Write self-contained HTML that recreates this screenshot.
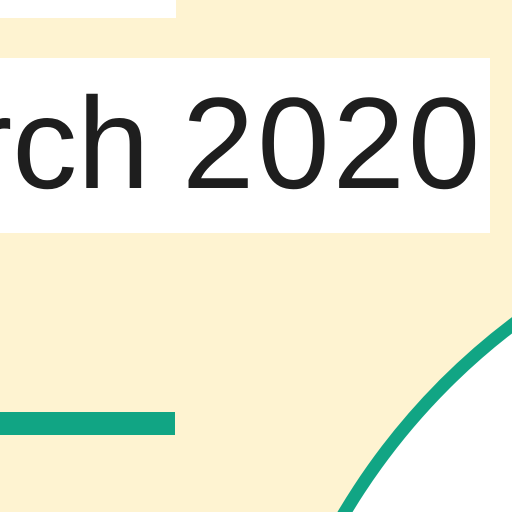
<!DOCTYPE html>
<html><head><style>
html,body{margin:0;padding:0;width:512px;height:512px;overflow:hidden;background:#fef3d1;}
svg{display:block}
</style></head><body>
<svg width="512" height="512" viewBox="0 0 512 512" xmlns="http://www.w3.org/2000/svg" style="position:absolute;left:0;top:0;overflow:hidden">
<rect x="0" y="0" width="512" height="512" fill="#fef3d1"/>
<rect x="0" y="0" width="176" height="18" fill="#ffffff"/>
<rect x="0" y="58" width="490" height="175" fill="#ffffff"/>
<text x="-31" y="188" font-family="Liberation Sans, sans-serif" font-size="130" fill="#1e1e1e">rch</text>
<text x="182" y="188" font-family="Liberation Sans, sans-serif" font-size="130" letter-spacing="3" fill="#1e1e1e">2020</text>
<rect x="0" y="412" width="175" height="23" fill="#11a584"/>
<circle cx="913" cy="852" r="662" fill="#ffffff" stroke="#11a584" stroke-width="13"/>
</svg>
</body></html>
